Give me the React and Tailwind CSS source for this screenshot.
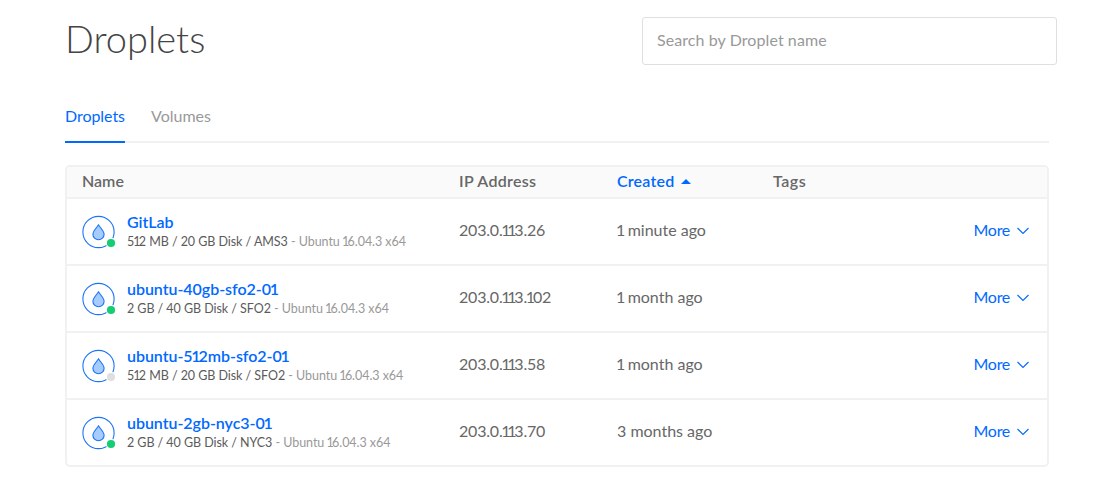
const droplets = [
  { name: "GitLab", specs: "512 MB / 20 GB Disk / AMS3", ip: "203.0.113.26", created: "1 minute ago", on: true },
  { name: "ubuntu-40gb-sfo2-01", specs: "2 GB / 40 GB Disk / SFO2", ip: "203.0.113.102", created: "1 month ago", on: true },
  { name: "ubuntu-512mb-sfo2-01", specs: "512 MB / 20 GB Disk / SFO2", ip: "203.0.113.58", created: "1 month ago", on: false },
  { name: "ubuntu-2gb-nyc3-01", specs: "2 GB / 40 GB Disk / NYC3", ip: "203.0.113.70", created: "3 months ago", on: true },
];

const columns = "grid grid-cols-[377px_158px_156px_1fr_auto] items-center pl-[15px] pr-[18px]";

// Sets the digit 1 narrower than the other figures.
function Figures({ children }) {
  return children.split(/(1)/).map((part, i, parts) =>
    part === "1" ? (
      <span
        key={i}
        className={i === 1 && parts[0] === "" ? "-ml-px tracking-[-0.11em]" : "-ml-[0.08em] tracking-[-0.13em]"}
      >
        1
      </span>
    ) : (
      part
    )
  );
}

function DropletIcon({ on }) {
  return (
    <svg className="mt-px h-[34px] w-[34px] shrink-0" viewBox="0 -0.5 34 34" fill="none">
      <circle cx="16.5" cy="16.5" r="15.6" stroke="#1b74f8" strokeWidth="1.1" />
      <path
        d="M16.5 9.2C15 12 10.9 15.3 10.9 18.8a5.6 5.4 0 0 0 11.2 0C22.1 15.3 18 12 16.5 9.2Z"
        fill="#a6cbfd"
        stroke="#1b74f8"
        strokeWidth="1.1"
        strokeLinejoin="round"
      />
      <circle cx="29" cy="27.5" r="5.3" fill="#fff" />
      <circle cx="29" cy="27.5" r="4.1" className={on ? "fill-[#15cd72]" : "fill-[#dfdfdf]"} />
    </svg>
  );
}

function Row({ droplet }) {
  return (
    <div className={`${columns} h-[67px] border-t-2 border-[#f1f1f1] text-[#676767]`}>
      <div className="flex items-center gap-[11px]">
        <DropletIcon on={droplet.on} />
        <div className="flex flex-col">
          <a className="h-5 font-semibold leading-[18px] tracking-[-0.04px] text-[#0069ff]"><Figures>{droplet.name}</Figures></a>
          <div className="h-[18px] whitespace-nowrap text-[12.5px] leading-[18px] tracking-[-0.05px] text-[#999]">
            <span className="text-[#5b5b5b]"><Figures>{droplet.specs}</Figures></span>
            {" - "}
            <Figures>Ubuntu 16.04.3 x64</Figures>
          </div>
        </div>
      </div>
      <div className="pb-[3px] tracking-[-0.2px]"><Figures>{droplet.ip}</Figures></div>
      <div className="pb-[3px]"><Figures>{droplet.created}</Figures></div>
      <div />
      <button className="flex items-center gap-[7px] pb-[3px] text-[#0069ff]">
        <span className="tracking-[-0.3px]">More</span>
        <svg className="mt-px h-2 w-3" viewBox="0 0 12 8" fill="none" stroke="currentColor" strokeWidth="1.1">
          <path d="M.5 1 6 6.5 11.5 1" />
        </svg>
      </button>
    </div>
  );
}

export default function App() {
  return (
    <div className="h-[482px] bg-white pl-[65px] font-['Lato',sans-serif] text-[16px] leading-6">
      <header className="flex w-[992px] items-start justify-between pt-[17px]">
        <h1 className="text-[38px] font-light leading-[43px] text-[#444]">Droplets</h1>
        <input
          className="h-12 w-[415px] rounded-[3px] border border-[#dfdfdf] px-[14px] pb-[3px] tracking-[0.08px] outline-none placeholder:text-[#999]"
          placeholder="Search by Droplet name"
        />
      </header>
      <nav className="mt-[38px] flex h-10 w-[984px] gap-[26px] border-b-2 border-[#f1f1f1]">
        <a className="h-10 w-[60px] border-b-2 border-[#0069ff] leading-[26px] tracking-[-0.05px] text-[#0069ff]">Droplets</a>
        <a className="leading-[26px] text-[#999]">Volumes</a>
      </nav>
      <main className="mt-[22px] w-[984px] overflow-hidden rounded-[5px] border-2 border-[#f1f1f1]">
        <div className={`${columns} h-[30px] bg-[#fafafa] pb-[2px] font-semibold text-[#676767]`}>
          <div>Name</div>
          <div className="tracking-[0.3px]">IP Address</div>
          <div className="flex items-center gap-[7px] text-[#0069ff]">
            <span className="tracking-[0.2px]">Created</span>
            <svg className="mt-px h-[5px] w-[10px]" viewBox="0 0 10 5" fill="currentColor">
              <path d="M0 5 5 0 10 5Z" />
            </svg>
          </div>
          <div className="tracking-[0.5px]">Tags</div>
        </div>
        {droplets.map((d) => (
          <Row key={d.name} droplet={d} />
        ))}
      </main>
    </div>
  );
}
